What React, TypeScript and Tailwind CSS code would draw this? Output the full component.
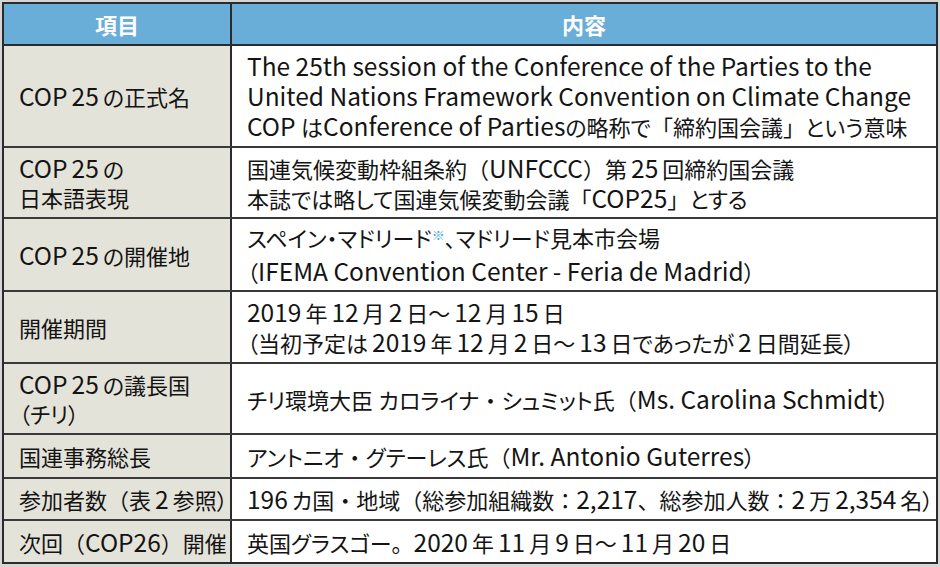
import React from 'react';

const rows = [
  {
    label: ['COP|25|の正式名'],
    body: [
      'The 25th session of the Conference of the Parties to the',
      'United Nations Framework Convention on Climate Change',
      'COP はConference of Partiesの略称で「締約国会議」という意味',
    ],
    h: 'h-[102px]',
  },
  {
    label: ['COP|25|の', '日本語表現'],
    body: ['国連気候変動枠組条約（UNFCCC）第|25|回締約国会議', '本誌では略して国連気候変動会議「COP25」とする'],
    h: 'h-[71px]',
  },
  { label: ['COP|25|の開催地'], body: null, h: 'h-[73px]' },
  {
    label: ['開催期間'],
    body: ['2019|年|12|月|2|日〜|12|月|15|日', '（当初予定は|2019|年|12|月|2|日〜|13|日であったが|2|日間延長）'],
    h: 'h-[72px]',
  },
  {
    label: ['COP|25|の議長国', '（チリ）'],
    body: ['チリ環境大臣 カロライナ・シュミット氏（Ms. Carolina Schmidt）'],
    h: 'h-[71px]',
  },
  { label: ['国連事務総長'], body: ['アントニオ・グテーレス氏（Mr. Antonio Guterres）'], h: 'h-[44px]' },
  {
    label: ['参加者数（表|2|参照）'],
    body: ['196|カ国・地域（総参加組織数：2,217、総参加人数：2|万|2,354|名）'],
    h: 'h-[42px]',
  },
  { label: ['次回（COP26）開催'], body: ['英国グラスゴー。2020|年|11|月|9|日〜|11|月|20|日'], h: 'h-[41px]' },
];

const LATIN = /([A-Za-z0-9 .,\-]+)/;
const PUNCT = /([（）「」・：、。〜]+)/;

// latin runs a bit larger than the kana/kanji, "|" = small gap,
// kana proportional, punctuation full width, line-edge brackets trimmed
function Line({ s }: { s: string }) {
  let head = '';
  let tail = '';
  let body = s;
  if (body.startsWith('（')) {
    head = '（';
    body = body.slice(1);
  }
  if (body.endsWith('）')) {
    tail = '）';
    body = body.slice(0, -1);
  }
  const parts: React.ReactNode[] = [];
  body.split('|').forEach((seg, i) => {
    if (i > 0) parts.push(<span key={`g${i}`} className="inline-block w-[4px]" />);
    seg.split(LATIN).forEach((run, j) => {
      if (!run) return;
      if (/^[A-Za-z0-9 .,\-]+$/.test(run)) {
        parts.push(
          <span key={`${i}-${j}`} className="text-[24.5px]">
            {run}
          </span>
        );
        return;
      }
      run.split(PUNCT).forEach((p, k) => {
        if (!p) return;
        if (/^[（）「」・：、。〜]+$/.test(p)) {
          parts.push(
            <span key={`${i}-${j}-${k}`} className="[font-feature-settings:normal]">
              {p}
            </span>
          );
        } else {
          parts.push(<React.Fragment key={`${i}-${j}-${k}`}>{p}</React.Fragment>);
        }
      });
    });
  });
  return (
    <div className="whitespace-nowrap">
      {head}
      {parts}
      {tail}
    </div>
  );
}

export default function App() {
  return (
    <div
      className="w-[940px] h-[567px] bg-[#d6d6d6] pt-[2px] pl-[2px] text-[22px] leading-[29px] text-[#141414]"
      style={{ fontFamily: '"Noto Sans CJK JP", "Noto Sans", sans-serif', fontFeatureSettings: '"palt"' }}
    >
      <div className="w-[936px] border-2 border-[#2b2b2b]">
        {/* Header */}
        <div className="grid h-[42px] grid-cols-[228px_1fr] border-b-2 border-[#2b2b2b] bg-[#68aed8] font-semibold text-white">
          <div className="flex items-center justify-center border-r-2 border-[#2b2b2b]">項目</div>
          <div className="flex items-center justify-center">内容</div>
        </div>

        {rows.map((row, i) => (
          <div
            key={i}
            className={`grid grid-cols-[228px_1fr] ${row.h} ${i < rows.length - 1 ? 'border-b-2 border-[#3a3a3a]' : ''}`}
          >
            <div className="flex flex-col justify-center border-r-2 border-[#2b2b2b] bg-[#e4e3d9] pl-[15px]">
              {row.label.map((l) => (
                <Line key={l} s={l} />
              ))}
            </div>
            <div className="flex flex-col justify-center bg-white pl-[15px]">
              {row.body ? (
                row.body.map((b) => <Line key={b} s={b} />)
              ) : (
                <>
                  <div className="whitespace-nowrap">
                    スペイン・マドリード
                    <span className="relative -top-[7px] text-[13px] text-[#3ea4e6]">※</span>
                    、マドリード見本市会場
                  </div>
                  <Line s="（IFEMA Convention Center - Feria de Madrid）" />
                </>
              )}
            </div>
          </div>
        ))}
      </div>
    </div>
  );
}
